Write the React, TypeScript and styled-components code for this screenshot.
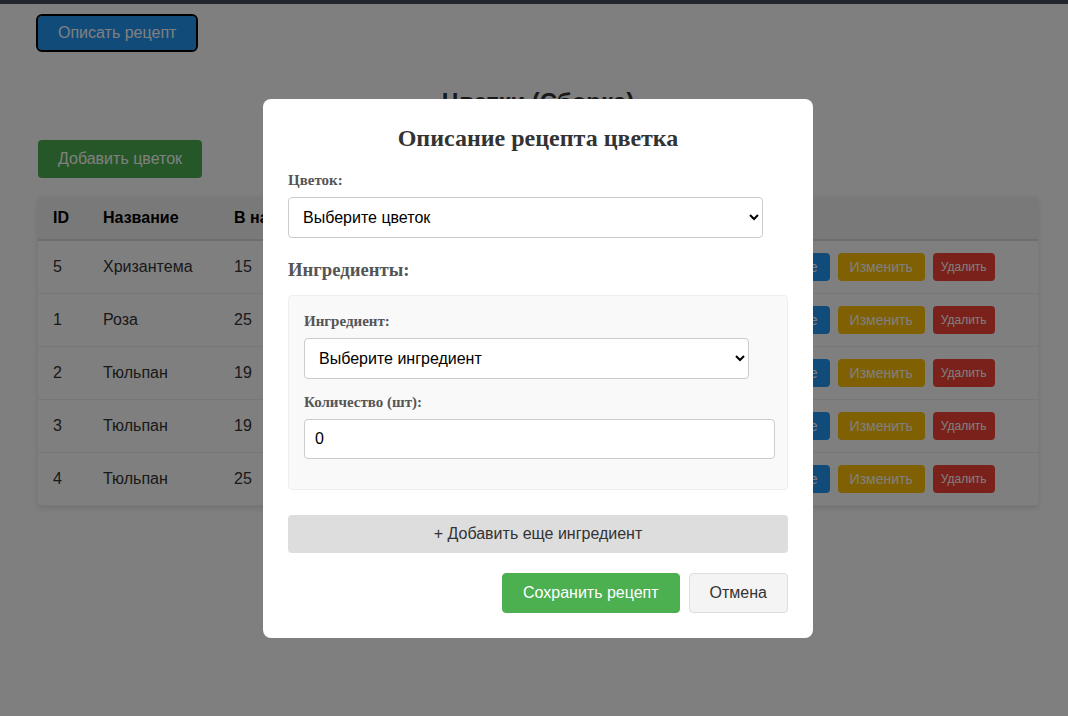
import React from "react";
import styled, { createGlobalStyle } from "styled-components";

const GlobalStyle = createGlobalStyle`
  html, body { margin: 0; padding: 0; background: #fff; }
  body { font-family: "Liberation Sans", Arial, sans-serif; color: #333; }
  * { box-sizing: border-box; }
`;

const TopBar = styled.div`
  height: 4px;
  background: #454f5d;
`;

const Page = styled.main`
  padding: 12px 30px 40px 38px;
  display: flex;
  flex-direction: column;
  align-items: flex-start;
`;

const PrimaryButton = styled.button`
  font-family: "Liberation Sans", Arial, sans-serif;
  font-size: 16px;
  line-height: 18px;
  padding: 8px 20px;
  color: #fff;
  background: #2196f3;
  border: none;
  border-radius: 4px;
  outline: 2px solid #000;
  outline-offset: 0;
`;

const PageTitle = styled.h2`
  align-self: stretch;
  text-align: center;
  font-size: 24px;
  line-height: 28px;
  margin: 38px 0 24px;
  color: #333;
`;

const AddButton = styled.button`
  font-family: "Liberation Sans", Arial, sans-serif;
  font-size: 16px;
  line-height: 18px;
  padding: 10px 20px;
  color: #fff;
  background: #4caf50;
  border: none;
  border-radius: 4px;
`;

const Table = styled.table`
  margin-top: 19px;
  width: 1000px;
  border-collapse: collapse;
  table-layout: fixed;
  background: #fff;
  box-shadow: 0 2px 6px rgba(0, 0, 0, 0.12);
  font-size: 16px;
`;

const Th = styled.th`
  text-align: left;
  padding: 12px 15px;
  background: #f2f2f2;
  color: #000;
  font-weight: bold;
  line-height: 18px;
  border-bottom: 2px solid #ddd;
`;

const Td = styled.td`
  padding: 12px 15px;
  line-height: 18px;
  color: #333;
  border-bottom: 1px solid #eee;
  vertical-align: middle;
`;

const Actions = styled.div`
  display: flex;
  gap: 8px;
  align-items: stretch;
`;

const RowButton = styled.button<{ $bg: string; $small?: boolean }>`
  font-family: "Liberation Sans", Arial, sans-serif;
  font-size: ${(p) => (p.$small ? "12px" : "14px")};
  line-height: ${(p) => (p.$small ? "14px" : "16px")};
  padding: ${(p) => (p.$small ? "7px 8px" : "6px 12px")};
  background: ${(p) => p.$bg};
  color: #fff;
  border: none;
  border-radius: 4px;
`;

const Overlay = styled.div`
  position: fixed;
  inset: 0;
  background: rgba(0, 0, 0, 0.5);
  display: flex;
  align-items: center;
  justify-content: center;
  padding: 21px 0 0 8px;
`;

const Modal = styled.div`
  width: 550px;
  background: #fff;
  border-radius: 8px;
  padding: 25px;
  font-family: "Liberation Serif", "Times New Roman", serif;
`;

const ModalTitle = styled.h2`
  margin: 0 0 20px;
  text-align: center;
  font-size: 24px;
  line-height: 28px;
  color: #333;
  font-weight: bold;
`;

const Field = styled.div`
  margin-bottom: 15px;
`;

const Label = styled.label`
  display: block;
  font-size: 15px;
  line-height: 17px;
  font-weight: bold;
  color: #555;
  margin-bottom: 8px;
`;

const Select = styled.select`
  width: 95%;
  padding: 10px;
  font-family: "Liberation Sans", Arial, sans-serif;
  font-size: 16px;
  color: #000;
  background: #fff;
  border: 1px solid #ccc;
  border-radius: 4px;
`;

const Input = styled.input`
  width: calc(100% + 3px);
  padding: 10px;
  font-family: "Liberation Sans", Arial, sans-serif;
  font-size: 16px;
  line-height: 18px;
  color: #000;
  background: #fff;
  border: 1px solid #ccc;
  border-radius: 4px;
`;

const SectionTitle = styled.h3`
  margin: 21px 0 14px;
  font-size: 18.7px;
  line-height: 22px;
  color: #555;
  font-weight: bold;
`;

const IngredientBox = styled.div`
  background: #f9f9f9;
  border: 1px solid #eee;
  border-radius: 4px;
  padding: 17px 15px 15px;
  margin-bottom: 25px;
`;

const WideButton = styled.button`
  display: block;
  width: 100%;
  font-family: "Liberation Sans", Arial, sans-serif;
  font-size: 16px;
  line-height: 18px;
  padding: 10px;
  background: #ddd;
  color: #333;
  border: none;
  border-radius: 4px;
`;

const Footer = styled.div`
  margin-top: 20px;
  display: flex;
  justify-content: flex-end;
  gap: 9px;
`;

const FooterButton = styled.button<{ $primary?: boolean }>`
  font-family: "Liberation Sans", Arial, sans-serif;
  font-size: 16px;
  line-height: 18px;
  padding: 10px 20px;
  border-radius: 4px;
  border: 1px solid ${(p) => (p.$primary ? "#4caf50" : "#ddd")};
  background: ${(p) => (p.$primary ? "#4caf50" : "#f4f4f4")};
  color: ${(p) => (p.$primary ? "#fff" : "#333")};
`;

const flowers = [
  { id: 5, name: "Хризантема", stock: 15, price: 120 },
  { id: 1, name: "Роза", stock: 25, price: 150 },
  { id: 2, name: "Тюльпан", stock: 19, price: 90 },
  { id: 3, name: "Тюльпан", stock: 19, price: 90 },
  { id: 4, name: "Тюльпан", stock: 25, price: 90 },
];

export default function App() {
  return (
    <>
      <GlobalStyle />
      <TopBar />
      <Page>
        <PrimaryButton>Описать рецепт</PrimaryButton>
        <PageTitle>Цветки (Сборка)</PageTitle>
        <AddButton>Добавить цветок</AddButton>
        <Table>
          <colgroup>
            <col style={{ width: 50 }} />
            <col style={{ width: 131 }} />
            <col style={{ width: 231 }} />
            <col style={{ width: 268 }} />
            <col style={{ width: 320 }} />
          </colgroup>
          <thead>
            <tr>
              <Th>ID</Th>
              <Th>Название</Th>
              <Th>В наличии</Th>
              <Th>Цена</Th>
              <Th>Действия</Th>
            </tr>
          </thead>
          <tbody>
            {flowers.map((f) => (
              <tr key={f.id}>
                <Td>{f.id}</Td>
                <Td>{f.name}</Td>
                <Td>{f.stock}</Td>
                <Td>{f.price} ₽</Td>
                <Td>
                  <Actions>
                    <RowButton $bg="#2196f3">Подробнее</RowButton>
                    <RowButton $bg="#ffc107">Изменить</RowButton>
                    <RowButton $bg="#f44336" $small>
                      Удалить
                    </RowButton>
                  </Actions>
                </Td>
              </tr>
            ))}
          </tbody>
        </Table>
      </Page>
      <Overlay>
        <Modal>
          <ModalTitle>Описание рецепта цветка</ModalTitle>
          <Field>
            <Label>Цветок:</Label>
            <Select defaultValue="">
              <option value="">Выберите цветок</option>
            </Select>
          </Field>
          <SectionTitle>Ингредиенты:</SectionTitle>
          <IngredientBox>
            <Field>
              <Label>Ингредиент:</Label>
              <Select defaultValue="">
                <option value="">Выберите ингредиент</option>
              </Select>
            </Field>
            <Field>
              <Label>Количество (шт):</Label>
              <Input type="number" defaultValue={0} />
            </Field>
          </IngredientBox>
          <WideButton>+ Добавить еще ингредиент</WideButton>
          <Footer>
            <FooterButton $primary>Сохранить рецепт</FooterButton>
            <FooterButton>Отмена</FooterButton>
          </Footer>
        </Modal>
      </Overlay>
    </>
  );
}
